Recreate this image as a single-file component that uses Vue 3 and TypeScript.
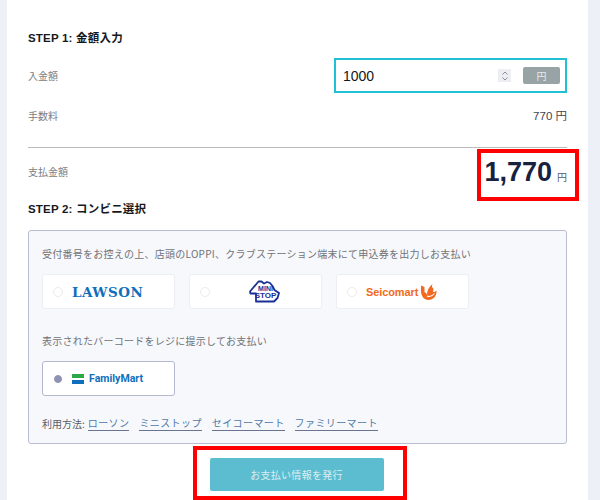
<script setup lang="ts">
const links: string[] = ['ローソン', 'ミニストップ', 'セイコーマート', 'ファミリーマート']
</script>

<template>
  <div class="page">
    <main class="panel">
      <h2 class="step step-one">STEP 1: 金額入力</h2>

      <div class="row row-input">
        <span class="label">入金額</span>
        <div class="amount">
          <span class="amount-value">1000</span>
          <span class="spinner">
            <svg width="12" height="12" viewBox="0 0 12 12" fill="none" stroke="#8a8f99" stroke-width="1">
              <path d="M3.500 4.500 6 2l2.500 2.500M3.500 7.500 6 10l2.500-2.500" />
            </svg>
          </span>
          <span class="unit-chip">円</span>
        </div>
      </div>

      <div class="row row-fee">
        <span class="label">手数料</span>
        <span class="fee">770 円</span>
      </div>

      <div class="row row-total">
        <span class="label">支払金額</span>
        <span class="total"><b>1,770</b><small>円</small></span>
      </div>

      <h2 class="step step-two">STEP 2: コンビニ選択</h2>

      <section class="box">
        <p class="hint">受付番号をお控えの上、店頭のLOPPI、クラブステーション端末にて申込券を出力しお支払い</p>
        <div class="options">
          <div class="option">
            <span class="radio"></span>
            <span class="logo lawson">LAWSON</span>
          </div>
          <div class="option">
            <span class="radio"></span>
            <span class="logo ministop">
              <svg class="house" width="33" height="23" viewBox="0 0 33 23" fill="#fff" stroke="#1a2f96" stroke-width="1.800" stroke-linejoin="round">
                <path d="M1 11.500 9.500 1.500h3l2.500 2 3-1.500 3 1 2.500 3 2 4 4.500 3-1.500 5-3.500 3.500H7v-8H1.500z" />
              </svg>
              <span class="mini-text"><span class="mini-top">MINI</span><span class="mini-bottom">STOP</span></span>
            </span>
          </div>
          <div class="option">
            <span class="radio"></span>
            <span class="logo seico">
              <span class="seico-text">Seicomart</span>
              <svg width="16" height="16" viewBox="0 0 16 16">
                <path fill="#f26a21" d="M0 1.500 3.500 3v5c1 .5 2 1.500 2.500 2.500C6 6.500 8 2.500 11.500 0c-1 2.500-.5 3.500.5 4 .5 1 .5 2.500 0 4 1.500 0 2.500-.5 3.500-1.500.5 5-3 9.500-8 9.500C3 16 0 12 0 7z" />
                <path fill="none" stroke="#fff" stroke-width="1.100" d="M6 12c2.500 1 5 .5 7.500-2.500" />
              </svg>
            </span>
          </div>
        </div>

        <p class="hint hint-second">表示されたバーコードをレジに提示してお支払い</p>
        <div class="options">
          <div class="option selected">
            <span class="radio on"></span>
            <span class="logo family">
              <span class="bars"><i class="green"></i><i class="blue"></i></span>
              <span class="family-text">FamilyMart</span>
            </span>
          </div>
        </div>

        <p class="usage">
          <span>利用方法:</span>
          <a v-for="link in links" :key="link" href="#" class="usage-link">{{ link }}</a>
        </p>
      </section>

      <div class="actions">
        <button type="button" class="issue">お支払い情報を発行</button>
      </div>

      <div class="mark mark-total"></div>
      <div class="mark mark-button"></div>
    </main>
  </div>
</template>

<style>
html, body { margin: 0; padding: 0; background: #edf1f7; }
</style>

<style scoped>
.page {
  width: 600px;
  height: 500px;
  overflow: hidden;
  box-sizing: border-box;
  padding: 0 12px 0 7px;
  font-family: "Liberation Sans", "Noto Sans CJK JP", sans-serif;
}
.panel {
  position: relative;
  height: 500px;
  box-sizing: border-box;
  background: #fff;
  padding: 31px 21px 0;
}
.step {
  margin: 0;
  font-size: 11.500px;
  line-height: 15px;
  font-weight: 700;
  letter-spacing: 0.2px;
  color: #16181d;
}
.row {
  display: flex;
  justify-content: space-between;
  align-items: center;
}
.label {
  font-size: 10px;
  color: #7a7d82;
  font-family: "Noto Sans CJK JP", sans-serif;
}
.row-input { margin-top: 12px; height: 35px; }
.amount {
  box-sizing: border-box;
  width: 233px;
  height: 35px;
  border: 2px solid #22c0d4;
  display: flex;
  align-items: center;
  padding: 0 5px 0 7px;
}
.amount-value {
  flex: 1;
  font-size: 14px;
  color: #14161a;
}
.spinner {
  width: 13px;
  height: 13px;
  background: #eceef2;
  display: flex;
  align-items: center;
  justify-content: center;
  margin-right: 12px;
}
.unit-chip {
  width: 37px;
  height: 17px;
  border-radius: 2px;
  background: #98a3a5;
  color: #e6eaea;
  font-size: 10px;
  line-height: 17px;
  text-align: center;
  font-family: "Noto Sans CJK JP", sans-serif;
}
.row-fee {
  height: 32px;
  margin-top: 6px;
}
.fee {
  font-size: 11.500px;
  color: #3f4450;
}
.row-total {
  margin-top: 16px;
  border-top: 1px solid #bcbcbc;
  height: 48px;
  box-sizing: border-box;
}
.total {
  display: flex;
  align-items: baseline;
  color: #18223f;
}
.total b {
  font-size: 27px;
  line-height: 30px;
  font-weight: 700;
}
.total small {
  font-size: 10px;
  margin-left: 5px;
  color: #555b68;
  font-family: "Noto Sans CJK JP", sans-serif;
}
.step-two { margin-top: 7px; }
.box {
  box-sizing: border-box;
  margin-top: 13px;
  height: 214px;
  border: 1px solid #b9bdd2;
  border-radius: 3px;
  background: #f7f8fb;
  padding: 14px 13px 0;
}
.hint {
  margin: 0;
  font-size: 10px;
  line-height: 18px;
  color: #6f7278;
  letter-spacing: 0.25px;
  font-family: "Noto Sans CJK JP", sans-serif;
  white-space: nowrap;
}
.hint-second { margin-top: 23px; }
.options {
  display: flex;
  gap: 14px;
  margin-top: 11px;
}
.option {
  box-sizing: border-box;
  width: 133px;
  height: 35px;
  background: #fff;
  border: 1px solid #eceef3;
  border-radius: 3px;
  display: flex;
  align-items: center;
  padding-left: 10px;
}
.option.selected { border-color: #b4b8cf; }
.radio {
  box-sizing: border-box;
  width: 10px;
  height: 10px;
  border-radius: 50%;
  border: 1px solid #e9ebf0;
  background: #fff;
  flex: none;
}
.radio.on {
  background: #8f93b3;
  border-color: #8f93b3;
  width: 8px;
  height: 8px;
  margin: 0 1px;
}
.logo {
  flex: 1;
  display: flex;
  align-items: center;
}
.lawson {
  padding-left: 9px;
  color: #0f6fbd;
  font-family: "DejaVu Serif", serif;
  font-weight: 700;
  font-size: 13.500px;
  letter-spacing: 0.5px;
  transform: scaleY(0.92);
}
.ministop {
  position: relative;
  height: 23px;
  padding-left: 39px;
}
.mini-text {
  position: absolute;
  left: 39px;
  width: 33px;
  top: 5px;
  display: flex;
  flex-direction: column;
  align-items: center;
  font-weight: 900;
  color: #1a2f96;
  white-space: nowrap;
  font-family: "Liberation Sans", sans-serif;
}
.mini-top { font-size: 7px; line-height: 7px; }
.mini-bottom { font-size: 8px; line-height: 8px; }
.seico {
  padding-left: 9px;
  gap: 3px;
}
.seico-text {
  color: #f26a21;
  font-weight: 700;
  font-size: 11px;
  letter-spacing: -0.1px;
}
.family {
  padding-left: 9px;
  gap: 5px;
}
.bars {
  display: flex;
  flex-direction: column;
  gap: 2px;
  width: 12px;
}
.bars i { display: block; height: 4px; }
.bars .green { background: #2aa84a; }
.bars .blue { background: #0f6fbd; }
.family-text {
  color: #0f6fbd;
  font-weight: 700;
  font-size: 10.600px;
  font-family: "Roboto", "Liberation Sans", sans-serif;
}
.usage {
  margin: 20px 0 0;
  display: flex;
  align-items: center;
  font-size: 10px;
  line-height: 14px;
  color: #5a5d63;
  font-family: "Noto Sans CJK JP", sans-serif;
}
.usage-link {
  color: #4f79a8;
  text-decoration: none;
  border-bottom: 1px solid #6a7490;
  letter-spacing: 0.4px;
  margin-right: 10px;
}
.usage > span { margin-right: 3px; }
.actions {
  display: flex;
  justify-content: center;
  margin-top: 14px;
  padding-right: 2px;
}
.issue {
  width: 174px;
  height: 33px;
  border: 0;
  border-radius: 2px;
  background: #5dbdd0;
  color: #dbeef2;
  font-size: 10px;
  letter-spacing: 0.3px;
  font-family: "Noto Sans CJK JP", sans-serif;
}
.mark {
  position: absolute;
  box-sizing: border-box;
  border: 4px solid #fe0000;
}
.mark-total { left: 470px; top: 149px; width: 102px; height: 52px; }
.mark-button { left: 186px; top: 446px; width: 214px; height: 54px; }
</style>
